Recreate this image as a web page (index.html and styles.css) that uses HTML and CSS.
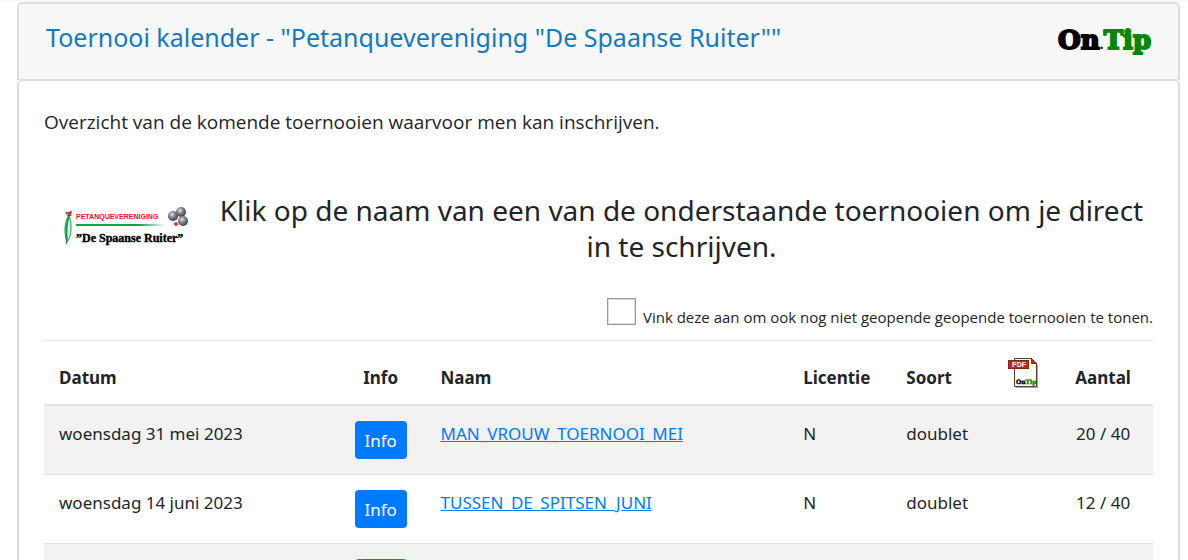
FILE: index.html
```
<!DOCTYPE html>
<html lang="nl">

<head>
    <meta charset="UTF-8">
    <title>Toernooi kalender</title>
    <link rel="stylesheet" href="styles.css">
</head>

<body>
    <div class="card">
        <div class="card-header">
            <h1>Toernooi kalender - "Petanquevereniging "De Spaanse Ruiter""</h1>
            <svg class="ontip" viewBox="0 0 96 32" role="img" aria-label="OnTip">
                <text x="0" y="23">On<tspan class="dot">.</tspan><tspan class="tip">Tip</tspan></text>
            </svg>
        </div>
        <div class="card-body">
            <p class="intro">Overzicht van de komende toernooien waarvoor men kan inschrijven.</p>

            <div class="banner">
                <svg class="club" viewBox="0 0 128 40" role="img" aria-label="De Spaanse Ruiter">
                    <defs>
                        <linearGradient id="line">
                            <stop offset="0" stop-color="#12a04b"/>
                            <stop offset="0.7" stop-color="#12a04b"/>
                            <stop offset="1" stop-color="#12a04b" stop-opacity="0"/>
                        </linearGradient>
                        <radialGradient id="ball" cx="0.4" cy="0.35" r="0.7">
                            <stop offset="0" stop-color="#e8e8f0"/>
                            <stop offset="0.4" stop-color="#8a8a96"/>
                            <stop offset="1" stop-color="#33333d"/>
                        </radialGradient>
                    </defs>
                    <path d="M5 9 C0 17 0 27 3 36 C8 30 8 18 5 9Z" fill="#dff0e4" stroke="#159a50"/>
                    <path d="M5 10 C2 18 2 28 3 36" fill="none" stroke="#159a50" stroke-width="2"/>
                    <path d="M3 35 L2 38" stroke="#555"/>
                    <path d="M3 10 L4 6 L8 5 L7 10Z" fill="#c33"/>
                    <path d="M1 6 L4 6 L3 9Z" fill="#486a50"/>
                    <text class="club-top" x="12" y="13">PETANQUEVERENIGING</text>
                    <rect x="12" y="18" width="90" height="2" fill="url(#line)"/>
                    <circle cx="117" cy="6" r="5" fill="url(#ball)"/>
                    <circle cx="109" cy="10" r="5" fill="url(#ball)"/>
                    <circle cx="119" cy="15" r="5" fill="url(#ball)"/>
                    <circle cx="112" cy="18" r="2" fill="#e33"/>
                    <text class="club-name" x="12" y="36">”De Spaanse Ruiter”</text>
                </svg>
                <h2>Klik op de naam van een van de onderstaande toernooien om je direct in te schrijven.</h2>
            </div>

            <div class="filter">
                <input type="checkbox" id="toon_alles">
                <label for="toon_alles">Vink deze aan om ook nog niet geopende geopende toernooien te tonen.</label>
            </div>

            <table>
                <colgroup>
                    <col class="c-datum">
                    <col class="c-info">
                    <col class="c-naam">
                    <col class="c-licentie">
                    <col class="c-soort">
                    <col class="c-pdf">
                    <col class="c-aantal">
                </colgroup>
                <thead>
                    <tr>
                        <th>Datum</th>
                        <th class="center">Info</th>
                        <th>Naam</th>
                        <th>Licentie</th>
                        <th>Soort</th>
                        <th class="center pdf">
                            <svg viewBox="0 0 30 30" role="img" aria-label="PDF">
                                <path d="M8 2 H25 L30 7 V30 H8Z" fill="#aaa"/>
                                <path d="M6.5 0.5 H23.5 L28.5 5.5 V28.5 H6.5Z" fill="#fffdf5" stroke="#5b3a26"/>
                                <path d="M23.5 0.5 L28.5 5.5 H23.5Z" fill="#d81e05" stroke="#5b3a26"/>
                                <rect x="0.5" y="2.5" width="20" height="8" fill="#d81e05" stroke="#7a2a12"/>
                                <text class="pdf-tag" x="4" y="9">PDF</text>
                                <text class="pdf-name" x="8" y="26">On<tspan class="tip">Tip</tspan></text>
                            </svg>
                        </th>
                        <th class="center">Aantal</th>
                    </tr>
                </thead>
                <tbody>
                    <tr>
                        <td>woensdag 31 mei 2023</td>
                        <td class="center"><button type="button" class="btn">Info</button></td>
                        <td><a href="#">MAN_VROUW_TOERNOOI_MEI</a></td>
                        <td>N</td>
                        <td>doublet</td>
                        <td></td>
                        <td class="center">20 / 40</td>
                    </tr>
                    <tr>
                        <td>woensdag 14 juni 2023</td>
                        <td class="center"><button type="button" class="btn">Info</button></td>
                        <td><a href="#">TUSSEN_DE_SPITSEN_JUNI</a></td>
                        <td>N</td>
                        <td>doublet</td>
                        <td></td>
                        <td class="center">12 / 40</td>
                    </tr>
                    <tr>
                        <td></td>
                        <td class="center"><button type="button" class="btn" aria-label="Info"></button></td>
                        <td></td>
                        <td></td>
                        <td></td>
                        <td></td>
                        <td></td>
                    </tr>
                </tbody>
            </table>
        </div>
    </div>
</body>

</html>
```
FILE: styles.css
```
* {
    box-sizing: border-box;
}

body {
    margin: 0;
    padding: 0 8px 0 17px;
    border-top: 2px solid #fafafa;
    background: #fff;
    color: #212529;
    font-family: "Noto Sans", sans-serif;
    font-size: 17px;
    line-height: 25px;
    overflow: hidden;
}

h1, h2, p {
    margin: 0;
    font-weight: 400;
}

.card-header {
    display: flex;
    justify-content: space-between;
    align-items: flex-start;
    height: 78px;
    padding: 16px 24px 0 27px;
    background: #f7f7f7;
    border: 2px solid #ddd;
    border-bottom-width: 1px;
    border-radius: 5px 5px 0 0;
}

.card-header h1 {
    color: #137abf;
    font-size: 25px;
    line-height: 34px;
}

.ontip {
    width: 96px;
    height: 32px;
    margin-top: 6px;
    overflow: visible;
}

.ontip text {
    font-family: "DejaVu Serif", serif;
    font-weight: 700;
    font-size: 26px;
    stroke: #000;
    stroke-width: 2px;
    stroke-linejoin: round;
}

.ontip .dot {
    font-size: 12px;
    stroke-width: 0;
}

.ontip .tip {
    fill: #080;
    stroke: #080;
}

.card-body {
    padding: 25px;
    border: 2px solid #ddd;
    border-top-width: 1px;
    border-radius: 5px;
}

.intro {
    font-family: "Open Sans", sans-serif;
    font-size: 19px;
    line-height: 32px;
}

.banner {
    display: flex;
    align-items: flex-start;
    padding: 54px 0 0 20px;
}

.club {
    flex: none;
    width: 128px;
    height: 40px;
    margin-top: 14px;
}

.club-top {
    fill: #e1112c;
    font-family: "Liberation Sans", sans-serif;
    font-weight: 700;
    font-size: 7px;
}

.club-name {
    font-family: "Liberation Serif", serif;
    font-weight: 700;
    font-size: 12px;
    stroke: #000;
    stroke-width: 0.4px;
}

.banner h2 {
    flex: 1;
    padding-left: 18px;
    font-size: 28px;
    line-height: 36px;
    text-align: center;
}

.filter {
    display: flex;
    justify-content: flex-end;
    align-items: flex-end;
    gap: 7px;
    margin-top: 34px;
    font-family: "Open Sans", sans-serif;
    font-size: 15px;
}

.filter input {
    appearance: none;
    width: 29px;
    height: 27px;
    margin: 0 0 4px;
    border: 1px solid #999;
    background: #fff;
    box-shadow: inset 0 0 0 1px #ddd;
}

.filter input:checked {
    background: #007bff;
}

.filter label {
    line-height: 24px;
}

table {
    width: 100%;
    margin-top: 11px;
    table-layout: fixed;
    border-collapse: separate;
    border-spacing: 0;
}

.c-datum { width: 26.3%; }
.c-info { width: 8.1%; }
.c-naam { width: 32.7%; }
.c-licentie { width: 9.3%; }
.c-soort { width: 9.1%; }
.c-pdf { width: 5.5%; }
.c-aantal { width: 9%; }

th, td {
    padding: 15px;
    border-top: 1px solid #dee2e6;
    text-align: left;
    vertical-align: top;
}

th {
    height: 66px;
    padding: 14px 15px;
    border-bottom: 2px solid #dee2e6;
    vertical-align: bottom;
}

tbody tr:first-child td {
    border-top: 0;
}

tbody tr:nth-child(odd) {
    background: #f2f2f2;
}

th.center, td.center {
    text-align: center;
}

th.pdf {
    padding: 16px 0;
}

.pdf svg {
    display: block;
    width: 30px;
    height: 30px;
    margin: 0 auto;
}

.pdf-tag {
    fill: #fff;
    font-family: "Liberation Sans", sans-serif;
    font-size: 7px;
    font-weight: 700;
}

.pdf-name {
    font-family: "DejaVu Serif", serif;
    font-size: 6px;
    font-weight: 700;
    stroke: #000;
    stroke-width: 0.4px;
}

.pdf-name .tip {
    fill: #080;
    stroke: #080;
}

a {
    color: #007bff;
    text-decoration: underline;
}

.btn {
    display: block;
    height: 38px;
    min-width: 52px;
    margin: 0 auto;
    padding: 1px 9px 0;
    border: 0;
    border-radius: 4px;
    background: #007bff;
    color: #fff;
    font: inherit;
    cursor: pointer;
}
```
